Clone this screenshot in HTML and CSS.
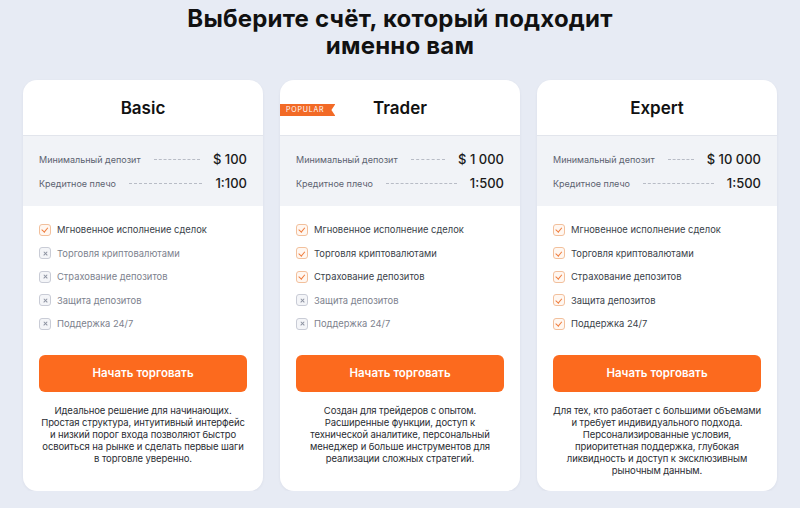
FILE: index.html
```html
<!DOCTYPE html>
<html lang="ru">
<head>
    <meta charset="UTF-8">
    <meta name="viewport" content="width=device-width, initial-scale=1.0">
    <title>Выберите счёт</title>
    <link rel="stylesheet" href="styles.css">
</head>
<body>
    <h1 class="page-title">Выберите счёт, который подходит<br>именно вам</h1>
    <main class="plans">
        <div class="plan">
            <div class="plan-head">
                <h2>Basic</h2>
            </div>
            <div class="plan-stats">
                <div class="stat"><span class="stat-label">Минимальный депозит</span><span class="stat-dots"></span><span class="stat-value">$ 100</span></div>
                <div class="stat"><span class="stat-label">Кредитное плечо</span><span class="stat-dots"></span><span class="stat-value">1:100</span></div>
            </div>
            <ul class="features">
                <li class="on"><span class="box"></span>Мгновенное исполнение сделок</li>
                <li class="off"><span class="box"></span>Торговля криптовалютами</li>
                <li class="off"><span class="box"></span>Страхование депозитов</li>
                <li class="off"><span class="box"></span>Защита депозитов</li>
                <li class="off"><span class="box"></span>Поддержка 24/7</li>
            </ul>
            <div class="plan-foot">
                <button class="btn">Начать торговать</button>
                <p class="plan-desc">Идеальное решение для начинающих.<br>Простая структура, интуитивный интерфейс<br>и низкий порог входа позволяют быстро<br>освоиться на рынке и сделать первые шаги<br>в торговле уверенно.</p>
            </div>
        </div>

        <div class="plan">
            <div class="plan-head">
                <span class="ribbon">POPULAR</span>
                <h2>Trader</h2>
            </div>
            <div class="plan-stats">
                <div class="stat"><span class="stat-label">Минимальный депозит</span><span class="stat-dots"></span><span class="stat-value">$ 1 000</span></div>
                <div class="stat"><span class="stat-label">Кредитное плечо</span><span class="stat-dots"></span><span class="stat-value">1:500</span></div>
            </div>
            <ul class="features">
                <li class="on"><span class="box"></span>Мгновенное исполнение сделок</li>
                <li class="on"><span class="box"></span>Торговля криптовалютами</li>
                <li class="on"><span class="box"></span>Страхование депозитов</li>
                <li class="off"><span class="box"></span>Защита депозитов</li>
                <li class="off"><span class="box"></span>Поддержка 24/7</li>
            </ul>
            <div class="plan-foot">
                <button class="btn">Начать торговать</button>
                <p class="plan-desc">Создан для трейдеров с опытом.<br>Расширенные функции, доступ к<br>технической аналитике, персональный<br>менеджер и больше инструментов для<br>реализации сложных стратегий.</p>
            </div>
        </div>

        <div class="plan">
            <div class="plan-head">
                <h2>Expert</h2>
            </div>
            <div class="plan-stats">
                <div class="stat"><span class="stat-label">Минимальный депозит</span><span class="stat-dots"></span><span class="stat-value">$ 10 000</span></div>
                <div class="stat"><span class="stat-label">Кредитное плечо</span><span class="stat-dots"></span><span class="stat-value">1:500</span></div>
            </div>
            <ul class="features">
                <li class="on"><span class="box"></span>Мгновенное исполнение сделок</li>
                <li class="on"><span class="box"></span>Торговля криптовалютами</li>
                <li class="on"><span class="box"></span>Страхование депозитов</li>
                <li class="on"><span class="box"></span>Защита депозитов</li>
                <li class="on"><span class="box"></span>Поддержка 24/7</li>
            </ul>
            <div class="plan-foot">
                <button class="btn">Начать торговать</button>
                <p class="plan-desc">Для тех, кто работает с большими объемами<br>и требует индивидуального подхода.<br>Персонализированные условия,<br>приоритетная поддержка, глубокая<br>ликвидность и доступ к эксклюзивным<br>рыночным данным.</p>
            </div>
        </div>
    </main>
</body>
</html>
```

FILE: styles.css
```css
body {
    font-family: Inter, "Noto Sans", sans-serif;
    margin: 0;
    padding: 5px 23px 0;
    background-color: #e7ebf4;
    color: #1a1a1a;
}

.page-title {
    margin: 0 0 21px;
    text-align: center;
    font-size: 24px;
    line-height: 27px;
    font-weight: 700;
    letter-spacing: 0.2px;
    color: #111;
}

.plans {
    display: grid;
    grid-template-columns: repeat(3, 1fr);
    gap: 17px;
}

.plan {
    background-color: #fff;
    border-radius: 14px;
    overflow: hidden;
    box-shadow: 0 1px 3px rgba(30, 40, 70, 0.06);
}

.plan-head {
    position: relative;
    height: 55px;
    display: flex;
    align-items: center;
    justify-content: center;
    border-bottom: 1px solid #e2e5ec;
}
.plan-head h2 {
    margin: 0;
    font-size: 17px;
    font-weight: 600;
    color: #111;
}

.ribbon {
    position: absolute;
    left: 0;
    top: 24px;
    height: 12px;
    padding: 0 11px 0 6px;
    background-color: #f26a26;
    color: #fff;
    font-size: 7px;
    line-height: 12px;
    letter-spacing: 0.8px;
    clip-path: polygon(0 0, 100% 0, calc(100% - 4px) 50%, 100% 100%, 0 100%);
}

.plan-stats {
    background-color: #f1f3f7;
    padding: 11px 16px 11px;
}
.stat {
    display: flex;
    align-items: center;
    height: 24px;
    white-space: nowrap;
}
.stat-label {
    font-size: 9px;
    color: #5c6270;
}
.stat-dots {
    flex: 1;
    margin: 0 13px;
    border-bottom: 1px dashed #b8bcc6;
}
.stat-value {
    font-size: 13px;
    font-weight: 500;
    color: #1a1a1a;
}

.features {
    list-style: none;
    margin: 0;
    padding: 12px 16px 19px;
}
.features li {
    display: flex;
    align-items: center;
    height: 23.5px;
    font-size: 9.4px;
}
.features li.on {
    color: #3a3f4a;
}
.features li.off {
    color: #7d828e;
}
.box {
    width: 10px;
    height: 10px;
    margin-right: 6px;
    border-radius: 3px;
    border: 1px solid #c9ccd6;
    background-color: #f4f5f8;
    position: relative;
    flex-shrink: 0;
}
.on .box {
    border-color: #f2c09c;
    background-color: #fff7f1;
}
.on .box::after {
    content: "";
    position: absolute;
    left: 3px;
    top: 1.5px;
    width: 2.5px;
    height: 4.5px;
    border-right: 1.2px solid #ef7c3c;
    border-bottom: 1.2px solid #ef7c3c;
    transform: rotate(40deg);
}
.off .box::before,
.off .box::after {
    content: "";
    position: absolute;
    left: 2.5px;
    top: 4.5px;
    width: 5px;
    height: 1.2px;
    background-color: #8c92a0;
    transform: rotate(45deg);
}
.off .box::after {
    transform: rotate(-45deg);
}

.plan-foot {
    padding: 0 16px 14px;
}
.btn {
    display: block;
    width: 100%;
    height: 37px;
    border: none;
    border-radius: 6px;
    background-color: #fc6a1e;
    color: #fff;
    font-family: inherit;
    font-size: 11.5px;
    font-weight: 600;
    cursor: pointer;
}
.plan-desc {
    margin: 13px -6px 0;
    text-align: center;
    font-size: 9.5px;
    line-height: 12.1px;
    letter-spacing: -0.1px;
    color: #2a2d33;
}
```
